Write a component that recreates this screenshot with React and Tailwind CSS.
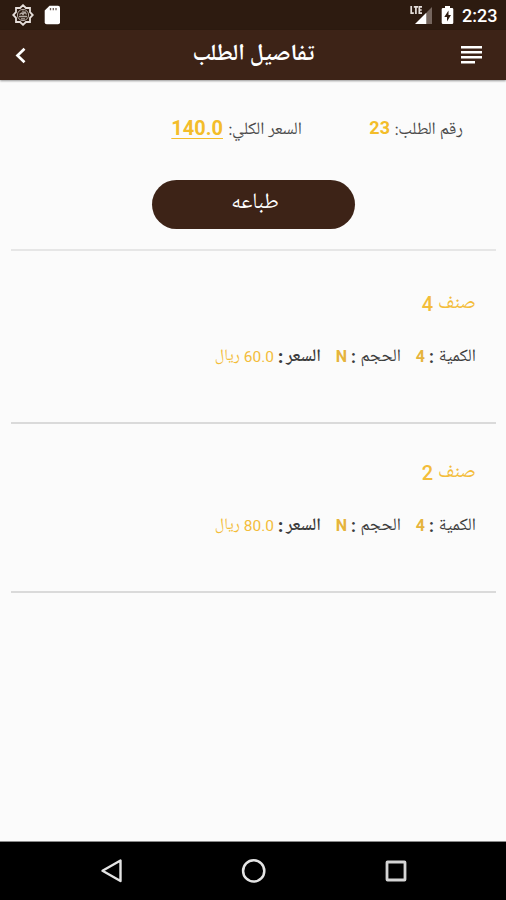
import React from "react";

const items = [
  { id: 4, qty: 4, size: "N", price: "60.0" },
  { id: 2, qty: 4, size: "N", price: "80.0" },
];

function StatusBar() {
  return (
    <div dir="ltr" className="flex h-[30px] items-center bg-[#2d1b10] pl-3 pr-[9px] text-white">
      <svg width="22" height="22" viewBox="0 0 22 22" fill="none" stroke="#e6dfdb" strokeWidth="1.8">
        <path d="M11 1.2 13.9 4H18v4.1l2.8 2.9L18 13.9V18h-4.1L11 20.8 8.1 18H4v-4.1L1.2 11 4 8.1V4h4.1z" />
        <circle cx="11" cy="11" r="5.6" stroke="#b5aaa4" strokeWidth="1" />
        <path d="M7 12.5h8M7.5 10.5l2-1.5 1.5 1.5 2-2.5 1.5 2.5M9 14.8h4M11 6.5v3" stroke="#b5aaa4" strokeWidth="1.3" />
      </svg>
      <svg className="ml-[10px]" width="17" height="20" viewBox="0 0 17 20">
        <path d="M5.5.7H14q2 0 2 2v14.6q0 2-2 2H2.7q-2 0-2-2V5.5z" fill="#fff" />
        <path d="M6.5 3v2.3M9.3 3v2.3M12 3v2.3" stroke="#6b5c54" strokeWidth="1.3" />
      </svg>
      <div className="flex-1"></div>
      <svg width="24" height="20" viewBox="0 0 24 20">
        <path d="M23 2v17h-5V7z" fill="#75665e" />
        <path d="M17.5 7.5V19H6z" fill="#fff" />
        <path d="M2.2 1v7.2h2.6M4.8 1.8H9M6.9 1.8v7.1M13 1.8h-2.7v6.4H13M10.3 5h2.4" fill="none" stroke="#e6dfdb" strokeWidth="1.7" />
      </svg>
      <svg className="ml-2" width="13" height="20" viewBox="0 0 13 20">
        <path d="M4 1h5v2h2q1.3 0 1.3 1.3v13.4q0 1.3-1.3 1.3H2q-1.3 0-1.3-1.3V4.3Q.7 3 2 3h2z" fill="#fff" />
        <path d="M7.5 5.5 3.3 12H6v4.5L10 10H7.5z" fill="#2d1b10" />
      </svg>
      <span className="ml-2 w-[35px] whitespace-nowrap pt-px font-['Roboto',sans-serif] text-[18px] font-medium leading-[30px]">2:23</span>
    </div>
  );
}

function Header() {
  return (
    <div dir="ltr" className="flex h-[50px] items-center justify-between bg-[#3d2317] pl-[14px] pr-6 text-white shadow-[0_1px_2px_rgba(0,0,0,0.4)]">
      <svg width="12" height="18" viewBox="0 0 12 18" fill="none" stroke="#fff" strokeWidth="2.7">
        <path d="M10.5 2.8 3.500 9.5l7 6.7" />
      </svg>
      <h1 dir="rtl" className="ml-5 whitespace-nowrap text-[23px] font-bold leading-[50px]">تفاصيل الطلب</h1>
      <svg width="21" height="20" viewBox="0 0 21 20" fill="#fff">
        <path d="M0 1h21v2.5H0zM0 6h21v2.5H0zM0 11h21v2.5H0zM0 16h14v2.5H0z" />
      </svg>
    </div>
  );
}

function Label({ text, className }) {
  return (
    <span className={"flex shrink-0 justify-between text-[#3c3c3c] " + className}>
      <span>{text}</span>
      <b className="font-['Roboto',sans-serif]">:</b>
    </span>
  );
}

function Item({ item }) {
  return (
    <div className="h-[169px] border-b-2 border-[#dadada] pr-5 pt-8">
      <p className="flex h-[34px] items-center gap-[5px] text-[20px] leading-[34px] text-[#f3bd3a]">
        <span>صنف</span>
        <span className="font-['Roboto',sans-serif] text-[20px] font-medium leading-[32px]">{item.id}</span>
      </p>
      <div className="mt-[19px] flex h-[34px] items-center whitespace-nowrap text-[17.5px] leading-[34px]">
        <Label text="الكمية" className="w-[47px]" />
        <b className="mr-1 w-[9px] font-['Roboto',sans-serif] text-[16px] text-[#e6b43c]">{item.qty}</b>
        <Label text="الحجم" className="mr-[15px] w-[50px]" />
        <b className="mr-1 w-[11px] font-['Roboto',sans-serif] text-[16px] text-[#e6b43c]">{item.size}</b>
        <Label text="السعر" className="mr-[15px] w-[43px] font-semibold" />
        <span className="mr-1 w-[29px] font-['Roboto',sans-serif] text-[15.5px] text-[#f3bd3a]">{item.price}</span>
        <span className="mr-[5px] text-[16px] text-[#f3bd3a]">ريال</span>
      </div>
    </div>
  );
}

function NavBar() {
  return (
    <div dir="ltr" className="flex h-[59px] items-center border-t border-[#8a8a8a] bg-black">
      <svg className="ml-[100px]" width="24" height="26" viewBox="0 0 24 26" fill="none" stroke="#e4e4e4" strokeWidth="2.4">
        <path d="M20.5 2.500v20.5L2.5 12.8z" strokeLinejoin="round" />
      </svg>
      <svg className="ml-[117px]" width="26" height="26" viewBox="0 0 26 26" fill="none" stroke="#e4e4e4" strokeWidth="2.5">
        <circle cx="12.700" cy="12.900" r="10.6" />
      </svg>
      <svg className="ml-[117px]" width="24" height="24" viewBox="0 0 24 24" fill="none" stroke="#d4d4d4" strokeWidth="2.8">
        <rect x="3" y="3" width="18" height="18" rx="0.5" />
      </svg>
    </div>
  );
}

export default function App() {
  return (
    <div dir="rtl" className="flex h-[900px] w-[506px] flex-col bg-[#fbfbfb] font-['Noto_Naskh_Arabic','Noto_Sans',sans-serif]">
      <StatusBar />
      <Header />
      <main className="flex-1 pl-[11px] pr-[10px]">
        <div className="flex h-[100px] items-center whitespace-nowrap pr-[33px] text-[17.5px] leading-[34px] text-[#4a4a4a]">
          <span className="w-[70px]">رقم الطلب:</span>
          <b className="mb-1 mr-[3px] w-[21px] font-['Roboto',sans-serif] text-[18px] text-[#f3bd2a]">23</b>
          <span className="mr-[67px] w-[74px]">السعر الكلي:</span>
          <b className="mb-[5px] mr-[5px] font-['Roboto',sans-serif] text-[20px] text-[#f3bd2a] underline decoration-1 underline-offset-[3px]">140.0</b>
        </div>
        <div className="flex h-[71px] justify-center border-b-2 border-[#e6e6e6]">
          <button className="h-[49px] w-[203px] rounded-full bg-[#3d2317] pb-[2px] pl-[3px] text-[22px] leading-[47px] text-white">طباعه</button>
        </div>
        <div className="pt-1">
          {items.map((item) => (
            <Item key={item.id} item={item} />
          ))}
        </div>
      </main>
      <NavBar />
    </div>
  );
}
